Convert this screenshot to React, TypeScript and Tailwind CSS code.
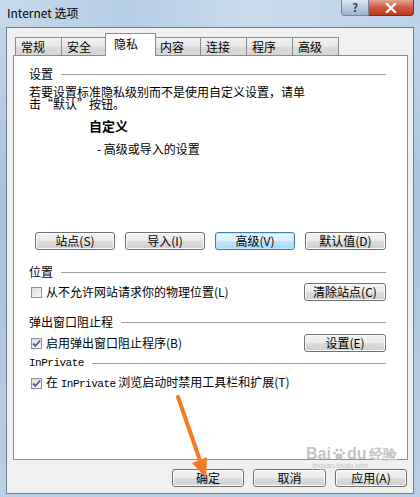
import React from 'react';

const font = "font-['Noto_Sans_CJK_SC','Noto_Sans',sans-serif]";
const btn = "h-[18px] flex items-center justify-center rounded-[3px] border border-[#707070] bg-[linear-gradient(to_bottom,#f2f2f2_0%,#ebebeb_50%,#dddddd_51%,#cfcfcf_100%)] text-[12px] leading-none text-black shadow-[inset_0_0_0_1px_#fcfcfc]";
const btnFocus = "h-[18px] flex items-center justify-center rounded-[3px] border border-[#3c7fb1] bg-[linear-gradient(to_bottom,#eaf6fd_0%,#d9f0fc_50%,#bee6fd_51%,#a7d9f5_100%)] text-[12px] leading-none text-black shadow-[inset_0_0_0_1px_#c4e5f6]";

const GroupHeader: React.FC<{ label: string; mono?: boolean }> = ({ label, mono }) => (
  <div className="h-[14px] flex items-center gap-[8px]">
    <span className={mono ? "font-['Liberation_Mono',monospace] text-[11px] leading-none tracking-[-0.5px]" : 'text-[12px] leading-none'}>{label}</span>
    <div className="flex-1 h-px bg-[#a0a0a0] mt-px" />
  </div>
);

const CheckBox: React.FC<{ checked?: boolean }> = ({ checked }) => (
  <div className="w-[11px] h-[11px] border border-[#8e8f8f] bg-[linear-gradient(135deg,#dcdcdc,#fbfbfb)] flex items-center justify-center shrink-0">
    {checked && (
      <svg width="9" height="9" viewBox="0 0 9 9">
        <path d="M1 4.5 L3.5 7 L8 1.5" fill="none" stroke="#4a5f97" strokeWidth="1.8" />
      </svg>
    )}
  </div>
);

const Tab: React.FC<{ label: string; active?: boolean }> = ({ label, active }) => (
  active ? (
    <div className="w-[51px] h-[23px] -mx-[2px] z-10 bg-white border border-[#898c95] border-b-0 flex items-start pt-[3px] pl-[8px] text-[12px] leading-[14px]">{label}</div>
  ) : (
    <div className="w-[47px] h-[19px] bg-[linear-gradient(to_bottom,#f3f3f3,#e6e6e6_50%,#dadada_51%,#d6d6d6)] border border-[#898c95] border-b-0 -mr-px flex items-center pl-[5px] text-[12px] leading-none">{label}</div>
  )
);

export default function App() {
  return (
    <div className={`${font} relative w-[420px] h-[497px] overflow-hidden bg-[linear-gradient(to_bottom,#c2d7ec,#a8c3df_40%,#b9cfe6)] text-black`}>
      {/* title bar */}
      <div className="h-[27px] flex items-start relative bg-[linear-gradient(to_right,#c7d9ec,#b4cde6_30%,#c9dbed_60%,#bcd2e9)]">
        <span className="absolute left-[7px] top-[6px] text-[12px] leading-[14px]">Internet 选项</span>
        <div className="ml-auto mr-[6px] flex">
          <div className="w-[28px] h-[16px] border border-[#6d85a2] border-t-0 rounded-bl-[4px] bg-[linear-gradient(to_bottom,#dbe6f2,#b7c9de_50%,#9fb5cf)] flex items-center justify-center text-[11px] leading-none text-[#2c3e58] font-bold">?</div>
          <div className="w-[45px] h-[16px] border border-[#7a2a1e] border-t-0 border-l-0 rounded-br-[4px] bg-[linear-gradient(to_bottom,#e5a393,#cf5a42_50%,#c0391f)] flex items-center justify-center">
            <svg width="12" height="10" viewBox="0 0 12 10">
              <path d="M2 1 L10 9 M10 1 L2 9" stroke="#fff" strokeWidth="2.4" strokeLinecap="square" />
            </svg>
          </div>
        </div>
      </div>

      {/* client area */}
      <div className="absolute left-[6px] top-[27px] w-[408px] h-[467px] bg-[#f0f0f0] border border-[#6f7d8c] flex flex-col">
        {/* tabs */}
        <div className="mt-[8px] ml-[8px] h-[20px] flex items-end">
          <Tab label="常规" />
          <Tab label="安全" />
          <Tab label="隐私" active />
          <Tab label="内容" />
          <Tab label="连接" />
          <Tab label="程序" />
          <Tab label="高级" />
        </div>
        <div className="ml-[6px] w-[395px] h-[405px] -mt-px bg-white border border-[#898c95] pt-[11px] pl-[15px] pr-[21px] flex flex-col">
          <GroupHeader label="设置" />
          <p className="mt-[5px] text-[12px] leading-[12px] w-[280px]">若要设置标准隐私级别而不是使用自定义设置，请单击“默认”按钮。</p>
          <div className="mt-[9px] pl-[60px] h-[14px] text-[13px] leading-[14px] font-bold">自定义</div>
          <div className="mt-[9px] pl-[68px] h-[14px] text-[12px] leading-[14px]">- 高级或导入的设置</div>

          <div className="mt-[76px] ml-[6px] flex gap-[10px]">
            <div className={`${btn} w-[80px]`}>站点(S)</div>
            <div className={`${btn} w-[80px]`}>导入(I)</div>
            <div className={`${btnFocus} w-[80px]`}>高级(V)</div>
            <div className={`${btn} w-[81px]`}>默认值(D)</div>
          </div>

          <div className="mt-[15px]"><GroupHeader label="位置" /></div>
          <div className="mt-[4px] h-[18px] flex items-center">
            <div className="ml-[2px]"><CheckBox /></div>
            <span className="ml-[4px] text-[12px] leading-none">从不允许网站请求你的物理位置(L)</span>
            <div className={`${btn} w-[82px] ml-auto`}>清除站点(C)</div>
          </div>

          <div className="mt-[14px]"><GroupHeader label="弹出窗口阻止程" /></div>
          <div className="mt-[5px] h-[18px] flex items-center">
            <div className="ml-[2px]"><CheckBox checked /></div>
            <span className="ml-[4px] text-[12px] leading-none">启用弹出窗口阻止程序(B)</span>
            <div className={`${btn} w-[82px] ml-auto`}>设置(E)</div>
          </div>

          <div className="mt-[4px]"><GroupHeader label="InPrivate" mono /></div>
          <div className="mt-[4px] h-[18px] flex items-center">
            <div className="ml-[2px]"><CheckBox checked /></div>
            <span className="ml-[4px] text-[12px] leading-none">
              在 <span className="font-['Liberation_Mono',monospace] text-[11px] tracking-[-0.5px]">InPrivate</span> 浏览启动时禁用工具栏和扩展(T)
            </span>
          </div>
        </div>

        {/* bottom buttons */}
        <div className="mt-[9px] flex justify-end gap-[9px] pr-[6px]">
          <div className={`${btn} w-[72px]`}>确定</div>
          <div className={`${btn} w-[73px]`}>取消</div>
          <div className={`${btn} w-[72px]`}>应用(A)</div>
        </div>
      </div>

      {/* Baidu watermark */}
      <div className="absolute left-[306px] top-[446px] flex flex-col items-start text-[#c4c4c4] pointer-events-none">
        <div className="flex items-center font-['Liberation_Sans',sans-serif] text-[16px] leading-[16px] font-bold">
          <span>Bai</span>
          <svg width="14" height="14" viewBox="0 0 14 14" className="mx-px">
            <ellipse cx="7" cy="9.5" rx="3.6" ry="3" fill="#c4c4c4" />
            <circle cx="2.5" cy="6" r="1.5" fill="#c4c4c4" />
            <circle cx="5" cy="3" r="1.5" fill="#c4c4c4" />
            <circle cx="9" cy="3" r="1.5" fill="#c4c4c4" />
            <circle cx="11.5" cy="6" r="1.5" fill="#c4c4c4" />
          </svg>
          <span>du</span>
          <span className="ml-[3px] text-[14px]">经验</span>
        </div>
        <span className="font-['Liberation_Sans',sans-serif] text-[7px] leading-[8px] ml-[6px]">jingyan.baidu.com</span>
      </div>

      {/* orange arrow */}
      <svg className="absolute left-0 top-0 pointer-events-none" width="420" height="497" viewBox="0 0 420 497">
        <path d="M178 397 L199.5 459" stroke="#f57a22" strokeWidth="4" strokeLinecap="round" />
        <polygon points="206,478 192,463 207,457" fill="#f57a22" />
      </svg>
    </div>
  );
}
